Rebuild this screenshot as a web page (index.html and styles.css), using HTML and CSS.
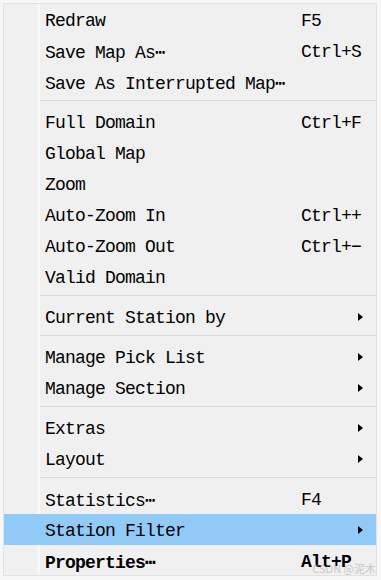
FILE: index.html
```html
<!DOCTYPE html>
<html>
<head>
<meta charset="utf-8">
<link rel="stylesheet" href="styles.css">
</head>
<body>
<div class="menu">
  <div class="inner">
    <div class="item"><span class="label">Redraw</span><span class="key">F5</span></div>
    <div class="item"><span class="label">Save Map As<span class="ell">⋯</span></span><span class="key">Ctrl+S</span></div>
    <div class="item"><span class="label">Save As Interrupted Map<span class="ell">⋯</span></span></div>
    <div class="sep"></div>
    <div class="item"><span class="label">Full Domain</span><span class="key">Ctrl+F</span></div>
    <div class="item"><span class="label">Global Map</span></div>
    <div class="item"><span class="label">Zoom</span></div>
    <div class="item"><span class="label">Auto-Zoom In</span><span class="key">Ctrl++</span></div>
    <div class="item"><span class="label">Auto-Zoom Out</span><span class="key">Ctrl+−</span></div>
    <div class="item"><span class="label">Valid Domain</span></div>
    <div class="sep"></div>
    <div class="item"><span class="label">Current Station by</span><span class="arrow"><svg width="5" height="8" viewBox="0 0 5 8"><polygon points="0,0 5,4 0,8" fill="#000"/></svg></span></div>
    <div class="sep"></div>
    <div class="item"><span class="label">Manage Pick List</span><span class="arrow"><svg width="5" height="8" viewBox="0 0 5 8"><polygon points="0,0 5,4 0,8" fill="#000"/></svg></span></div>
    <div class="item"><span class="label">Manage Section</span><span class="arrow"><svg width="5" height="8" viewBox="0 0 5 8"><polygon points="0,0 5,4 0,8" fill="#000"/></svg></span></div>
    <div class="sep"></div>
    <div class="item"><span class="label">Extras</span><span class="arrow"><svg width="5" height="8" viewBox="0 0 5 8"><polygon points="0,0 5,4 0,8" fill="#000"/></svg></span></div>
    <div class="item"><span class="label">Layout</span><span class="arrow"><svg width="5" height="8" viewBox="0 0 5 8"><polygon points="0,0 5,4 0,8" fill="#000"/></svg></span></div>
    <div class="sep"></div>
    <div class="item"><span class="label">Statistics<span class="ell">⋯</span></span><span class="key">F4</span></div>
    <div class="item active"><span class="label">Station Filter</span><span class="arrow"><svg width="5" height="8" viewBox="0 0 5 8"><polygon points="0,0 5,4 0,8" fill="#000"/></svg></span></div>
    <div class="item bold"><span class="label">Properties<span class="ell">⋯</span></span><span class="key">Alt+P</span></div>
  </div>
  <div class="watermark">CSDN @泥木</div>
</div>
</body>
</html>
```
FILE: styles.css
```css
html, body {
  margin: 0;
  padding: 0;
  background: #f0f0f0;
}
.menu {
  position: relative;
  width: 381px;
  height: 580px;
  box-sizing: border-box;
  padding: 3px 4px 4px 3px;
  background: #f7f7f7;
  overflow: hidden;
}
.inner {
  height: 100%;
  box-sizing: border-box;
  border: 1px solid #e2e2e2;
  background: #f0f0f0 linear-gradient(to right, transparent 33px, #f8f8f8 33px, #f8f8f8 36px, transparent 36px);
  display: flex;
  flex-direction: column;
}
.item {
  display: grid;
  grid-template-columns: 41px 1fr 57px 18px;
  height: 31px;
  box-sizing: border-box;
  padding-top: 3px;
  flex: none;
  align-items: center;
  font-family: "Liberation Mono", "DejaVu Sans Mono", monospace;
  font-size: 18px;
  letter-spacing: -0.8px;
  color: #000;
  white-space: nowrap;
}
.label {
  grid-column: 2;
}
.key {
  grid-column: 3;
}
.arrow {
  grid-column: 4;
  display: flex;
  align-items: center;
  margin-top: -3px;
}
.arrow svg {
  display: block;
}
.ell {
  display: inline-block;
  width: 20px;
  text-align: left;
  font-family: "DejaVu Sans Mono", monospace;
  font-weight: normal;
  letter-spacing: -1px;
}
.bold {
  font-weight: bold;
}
.bold .ell {
  font-weight: bold;
}
.active {
  background: #91c9f7;
}
.sep {
  flex: none;
  height: 1px;
  margin: 3px 0 5px 36px;
  background: #d7d7d7;
}
.watermark {
  position: absolute;
  right: 5px;
  bottom: 4px;
  font-family: "Noto Sans CJK SC", "Noto Sans", sans-serif;
  font-size: 11px;
  color: rgba(160, 160, 160, 0.55);
}
```
